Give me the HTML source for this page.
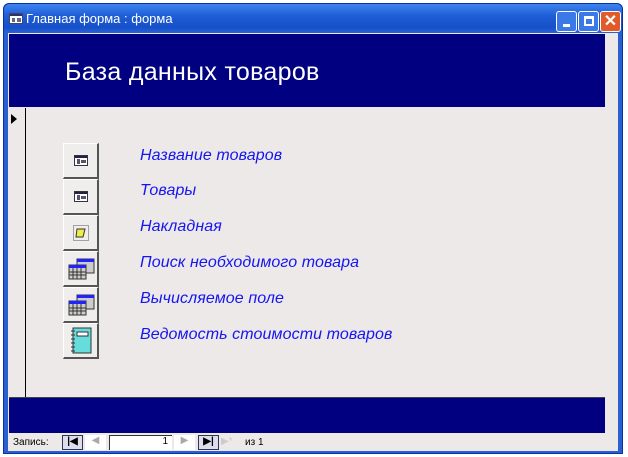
<!DOCTYPE html>
<html><head><meta charset="utf-8"><style>
*{margin:0;padding:0;box-sizing:border-box}
body{width:628px;height:457px;background:#fff;position:relative;overflow:hidden;font-family:"Liberation Sans",sans-serif}
.win{position:absolute;left:3px;top:3px;width:620px;height:451px;background:#2a5fd0;border:1px solid #0831a8;border-radius:6px 6px 0 0}
.title{position:absolute;left:0;top:0;width:100%;height:29px;background:linear-gradient(#3d84f0,#1f5ed6 40%,#1650c8 80%,#2a62d8);border-radius:6px 6px 0 0}
.title span{position:absolute;left:22px;top:7px;color:#fff;font-size:13px}
.client{position:absolute;left:4px;top:29px;width:610px;height:418px;background:#ece9e8}
.hdr{position:absolute;left:1px;top:1px;width:596px;height:73px;background:#000080}
.hdr div{position:absolute;left:56px;top:24px;color:#fff;font-size:25px;letter-spacing:0.3px}
.ftr{position:absolute;left:1px;top:364px;width:596px;height:36px;background:#000080;border-top:1px solid #444}
.btn{position:absolute;left:55px;width:36px;height:36px;background:#efeeec;border-right:2px solid #555;border-bottom:2px solid #555;border-top:1px solid #fff;border-left:1px solid #fff}
.lbl{position:absolute;left:132px;color:#1515f0;font-style:italic;font-size:16px;letter-spacing:0.1px}
.tb{position:absolute;top:7px;width:21px;height:21px;border:1px solid #fff;border-radius:3px}
</style></head><body>
<div class="win">
<div class="title"><svg style="position:absolute;left:5px;top:9px" width="14" height="11"><rect x="0.5" y="0.5" width="13" height="10" fill="#fff" stroke="#446"/><rect x="1" y="1" width="12" height="2" fill="#336"/><rect x="3" y="5" width="3" height="4" fill="#668"/><rect x="8" y="5" width="4" height="4" fill="#668"/></svg><span>Главная форма : форма</span>
<div class="tb" style="left:552px;background:#3b78e8"><div style="position:absolute;left:6px;top:12px;width:7px;height:3px;background:#fff"></div></div>
<div class="tb" style="left:574px;background:#3b78e8"><div style="position:absolute;left:5px;top:4px;width:10px;height:10px;border:2px solid #fff;border-top-width:3px"></div></div>
<div class="tb" style="left:596px;background:#e05a2a;color:#fff;font-weight:bold;font-size:16px;text-align:center;line-height:19px">✕</div>
</div>
<div class="client">
<div class="hdr"><div>База данных товаров</div></div>
<div style="position:absolute;left:3px;top:81px;width:0;height:0;border-left:6px solid #000;border-top:5px solid transparent;border-bottom:5px solid transparent"></div>
<div style="position:absolute;left:17px;top:75px;width:1px;height:289px;background:#000"></div>
<div class="btn" style="top:110px"><svg style="position:absolute;left:10px;top:11px" width="14" height="11"><rect x=".5" y=".5" width="13" height="10" fill="#fff" stroke="#334"/><rect x="1" y="1" width="12" height="2" fill="#224"/><rect x="3" y="4" width="3" height="5" fill="#556"/><rect x="7" y="5" width="5" height="3" fill="#556"/></svg></div>
<div class="btn" style="top:146px"><svg style="position:absolute;left:10px;top:11px" width="14" height="11"><rect x=".5" y=".5" width="13" height="10" fill="#fff" stroke="#334"/><rect x="1" y="1" width="12" height="2" fill="#224"/><rect x="3" y="4" width="3" height="5" fill="#556"/><rect x="7" y="5" width="5" height="3" fill="#556"/></svg></div>
<div class="btn" style="top:182px"><svg style="position:absolute;left:9px;top:9px" width="16" height="16"><rect x=".5" y=".5" width="15" height="15" fill="none" stroke="#555" stroke-dasharray="1 1"/><path d="M4 4h8l-2 8H3z" fill="#ee4" stroke="#333"/></svg></div>
<div class="btn" style="top:218px"><svg style="position:absolute;left:4px;top:6px" width="27" height="22"><rect x="9" y="1" width="17" height="14" fill="#ccc" stroke="#333"/><rect x="9" y="1" width="17" height="3" fill="#22f"/><rect x="1" y="7" width="17" height="14" fill="#ccc" stroke="#333"/><rect x="1" y="7" width="17" height="3" fill="#22f"/><path d="M5 10v11M9 10v11M13 10v11M1 14h17M1 17h17" stroke="#333"/></svg></div>
<div class="btn" style="top:254px"><svg style="position:absolute;left:4px;top:6px" width="27" height="22"><rect x="9" y="1" width="17" height="14" fill="#ccc" stroke="#333"/><rect x="9" y="1" width="17" height="3" fill="#22f"/><rect x="1" y="7" width="17" height="14" fill="#ccc" stroke="#333"/><rect x="1" y="7" width="17" height="3" fill="#22f"/><path d="M5 10v11M9 10v11M13 10v11M1 14h17M1 17h17" stroke="#333"/></svg></div>
<div class="btn" style="top:290px"><svg style="position:absolute;left:5px;top:3px" width="24" height="28"><rect x="4" y="1" width="18" height="25" fill="#6dd" stroke="#333"/><rect x="8" y="5" width="11" height="4" fill="#fff" stroke="#333"/><path d="M2 4h4M2 8h4M2 12h4M2 16h4M2 20h4M2 24h4" stroke="#333"/></svg></div>
<div class="lbl" style="top:114px">Название товаров</div>
<div class="lbl" style="top:149px">Товары</div>
<div class="lbl" style="top:185px">Накладная</div>
<div class="lbl" style="top:221px">Поиск необходимого товара</div>
<div class="lbl" style="top:257px">Вычисляемое поле</div>
<div class="lbl" style="top:293px">Ведомость стоимости товаров</div>
<div class="ftr"></div>
<div style="position:absolute;left:0;top:401px;width:610px;height:17px;font-size:10px">
<span style="position:absolute;left:5px;top:3px">Запись:</span>
<div style="position:absolute;left:54px;top:1px;width:21px;height:15px;border:1px solid #335;background:#dde;font-size:10px;font-weight:bold;text-align:center">|◀</div>
<div style="position:absolute;left:77px;top:1px;width:21px;height:15px;background:#fff;color:#aaa;text-align:center">◀</div>
<div style="position:absolute;left:101px;top:1px;width:63px;height:15px;background:#fff;border-top:1px solid #333;border-left:1px solid #333;text-align:right;padding-right:4px">1</div>
<div style="position:absolute;left:166px;top:1px;width:21px;height:15px;background:#fff;color:#aaa;text-align:center">▶</div>
<div style="position:absolute;left:190px;top:1px;width:21px;height:15px;border:1px solid #335;background:#dde;font-weight:bold;text-align:center">▶|</div>
<span style="position:absolute;left:213px;top:2px;color:#ccc">▶*</span>
<span style="position:absolute;left:237px;top:3px">из 1</span>
</div>
</div>
</div>
</body></html>
